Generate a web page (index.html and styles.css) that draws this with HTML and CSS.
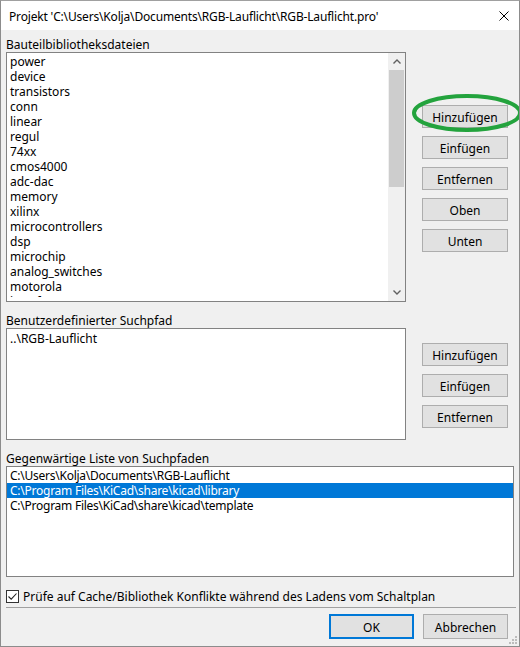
FILE: index.html
```html
<!DOCTYPE html>
<html lang="de">
<head>
  <meta charset="UTF-8" />
  <title>Projekt RGB-Lauflicht</title>
  <link rel="stylesheet" href="styles.css">
</head>
<body>
  <div class="window">
    <div class="titlebar">
      <span class="title">Projekt 'C:\Users\Kolja\Documents\RGB-Lauflicht\RGB-Lauflicht.pro'</span>
      <svg class="close" width="10" height="10" viewBox="0 0 10 10"><path d="M0.5 0.5 L9.5 9.5 M9.5 0.5 L0.5 9.5" stroke="#000" stroke-width="1" fill="none"/></svg>
    </div>
    <div class="content">
      <div class="section">
        <div class="label">Bauteilbibliotheksdateien</div>
        <div class="row">
          <div class="listbox libs">
            <ul class="items">
              <li>power</li>
              <li>device</li>
              <li>transistors</li>
              <li>conn</li>
              <li>linear</li>
              <li>regul</li>
              <li>74xx</li>
              <li>cmos4000</li>
              <li>adc-dac</li>
              <li>memory</li>
              <li>xilinx</li>
              <li>microcontrollers</li>
              <li>dsp</li>
              <li>microchip</li>
              <li>analog_switches</li>
              <li>motorola</li>
              <li>interface</li>
            </ul>
            <div class="scrollbar">
              <div class="arrow"><svg width="8" height="5" viewBox="0 0 8 5"><path d="M0.5 4.5 L4 1 L7.5 4.5" stroke="#606060" stroke-width="1.4" fill="none"/></svg></div>
              <div class="track"><div class="thumb"></div></div>
              <div class="arrow"><svg width="8" height="5" viewBox="0 0 8 5"><path d="M0.5 0.5 L4 4 L7.5 0.5" stroke="#606060" stroke-width="1.4" fill="none"/></svg></div>
            </div>
          </div>
          <div class="buttons top">
            <button>Hinzufügen</button>
            <button>Einfügen</button>
            <button>Entfernen</button>
            <button>Oben</button>
            <button>Unten</button>
          </div>
        </div>
      </div>

      <div class="section">
        <div class="label">Benutzerdefinierter Suchpfad</div>
        <div class="row">
          <div class="listbox user">
            <ul class="items">
              <li>..\RGB-Lauflicht</li>
            </ul>
          </div>
          <div class="buttons mid">
            <button>Hinzufügen</button>
            <button>Einfügen</button>
            <button>Entfernen</button>
          </div>
        </div>
      </div>

      <div class="section">
        <div class="label">Gegenwärtige Liste von Suchpfaden</div>
        <div class="listbox paths">
          <ul class="items">
            <li>C:\Users\Kolja\Documents\RGB-Lauflicht</li>
            <li class="selected">C:\Program Files\KiCad\share\kicad\library</li>
            <li>C:\Program Files\KiCad\share\kicad\template</li>
          </ul>
        </div>
      </div>

      <label class="check">
        <span class="box"><svg width="11" height="11" viewBox="0 0 11 11"><path d="M1.5 5.5 L4.2 8.2 L9.5 2.5" stroke="#222" stroke-width="1.1" fill="none"/></svg></span>
        Prüfe auf Cache/Bibliothek Konflikte während des Ladens vom Schaltplan
      </label>

      <div class="separator"></div>

      <div class="footer">
        <button class="default">OK</button>
        <button>Abbrechen</button>
      </div>
    </div>

    <svg class="grip" width="8" height="8" viewBox="0 0 8 8">
      <rect x="6" y="0" width="2" height="2" fill="#bcbcbc"/>
      <rect x="3" y="3" width="2" height="2" fill="#bcbcbc"/>
      <rect x="6" y="3" width="2" height="2" fill="#bcbcbc"/>
      <rect x="0" y="6" width="2" height="2" fill="#bcbcbc"/>
      <rect x="3" y="6" width="2" height="2" fill="#bcbcbc"/>
      <rect x="6" y="6" width="2" height="2" fill="#bcbcbc"/>
    </svg>

    <!-- highlight drawn over the dialog -->
    <svg class="highlight" width="112" height="40" viewBox="0 0 112 40">
      <ellipse cx="56" cy="20" rx="53" ry="17" stroke="#23a33d" stroke-width="4" fill="none"/>
    </svg>
  </div>
</body>
</html>
```

FILE: styles.css
```css
* { box-sizing: border-box; }
body { margin: 0; background: #fff; font-family: "Segoe UI", "Noto Sans", sans-serif; font-size: 12px; color: #000; }
.window { position: relative; width: 520px; height: 647px; border: 1px solid #8c8c8c; border-top-color: #a0a0a0; background: #f0f0f0; overflow: hidden; }
.titlebar { height: 29px; background: #fff; display: flex; align-items: center; justify-content: space-between; padding: 0 10px 0 8px; }
.title { line-height: 15px; padding-top: 1px; letter-spacing: -0.17px; }
.close { margin-top: 1px; }
.content { padding: 6px 5px 0 5px; }
.label { line-height: 15px; height: 15px; margin-bottom: 1px; padding-top: 1px; }
.section + .section { margin-top: 10px; }
.row { display: flex; align-items: flex-start; }
.listbox { background: #fff; border: 1px solid #828282; display: flex; overflow: hidden; }
.items { list-style: none; margin: 0; padding: 1px 0 0; flex: 1; overflow: hidden; }
.items li { line-height: 15px; height: 15px; padding-left: 3px; white-space: nowrap; }
.items li.selected { background: #0078d7; color: #fff; }
.libs { width: 400px; height: 250px; align-items: flex-start; }
.libs .items { height: 244px; }
.libs .scrollbar { align-self: stretch; }
.user { width: 400px; height: 112px; }
.user .items { padding-top: 2px; }
.paths { width: 508px; height: 111px; letter-spacing: -0.25px; }
.paths .items { padding-top: 1px; }
.scrollbar { width: 17px; background: #f0f0f0; display: flex; flex-direction: column; }
.arrow { height: 17px; display: flex; align-items: center; justify-content: center; }
.track { flex: 1; }
.thumb { height: 117px; margin: 0 1px; background: #cdcdcd; }
.buttons { margin-left: 16px; display: flex; flex-direction: column; gap: 8px; }
.buttons.top { margin-top: 53px; }
.buttons.mid { margin-top: 15px; }
button { font-family: inherit; font-size: 12px; color: #000; background: #e1e1e1; border: 1px solid #adadad; width: 86px; height: 23px; padding: 1px 0 0; line-height: 15px; }
.check { display: flex; align-items: center; gap: 4px; line-height: 15px; margin-top: 12px; }
.box { width: 13px; height: 13px; border: 1px solid #333; background: #fff; display: flex; align-items: center; justify-content: center; }
.separator { height: 1px; width: 510px; background: #a0a0a0; margin-top: 3px; }
.footer { display: flex; justify-content: flex-end; gap: 9px; margin-top: 6px; padding-right: 6px; }
.footer button { height: 25px; width: 85px; }
.footer button.default { border: 2px solid #0078d7; }
.grip { position: absolute; right: 2px; bottom: 2px; }
.highlight { position: absolute; left: 410px; top: 92px; }
```
